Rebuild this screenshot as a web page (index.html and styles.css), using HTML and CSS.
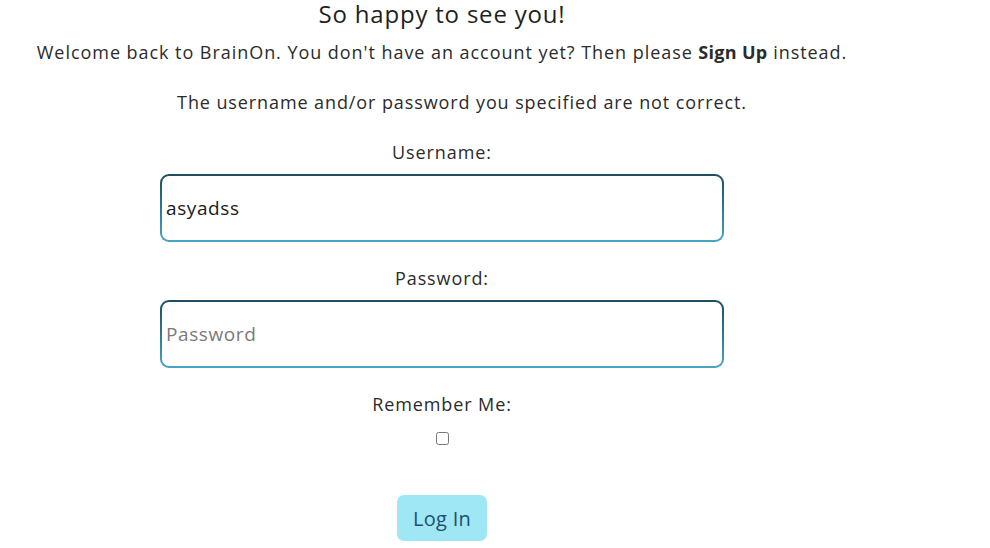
FILE: index.html
```html
<!DOCTYPE html>
<html>
<head>
<meta charset="utf-8">
<link rel="stylesheet" href="styles.css">
</head>
<body>
<main class="page">
  <h1 class="title">So happy to see you!</h1>
  <p class="intro">Welcome back to BrainOn. You don't have an account yet? Then please <a class="signup" href="#">Sign Up</a> instead.</p>
  <p class="error">The username and/or password you specified are not correct.</p>
  <form class="form">
    <label class="label" for="u">Username:</label>
    <input class="field" id="u" type="text" value="asyadss">
    <label class="label label-gap" for="p">Password:</label>
    <input class="field" id="p" type="password" placeholder="Password">
    <label class="label label-gap" for="r">Remember Me:</label>
    <input class="check" id="r" type="checkbox">
    <button class="btn" type="button">Log In</button>
  </form>
</main>
</body>
</html>
```
FILE: styles.css
```css
html, body { margin: 0; padding: 0; background: #fff; }
body {
  font-family: "Open Sans", "Noto Sans", sans-serif;
  color: #2b2b2b;
  letter-spacing: 0.9px;
}
.page {
  width: 884px;
  text-align: center;
}
.title {
  margin: 0;
  font-size: 24px;
  font-weight: 400;
  line-height: 27px;
  letter-spacing: 0.8px;
  color: #1f1f1f;
}
.intro {
  margin: 13px 0 0;
  font-size: 18px;
  line-height: 24px;
  letter-spacing: 0.95px;
}
.signup {
  color: #2b2b2b;
  font-weight: 700;
  letter-spacing: 0.3px;
  text-decoration: none;
}
.error {
  margin: 26px 0 0;
  padding-left: 40px;
  font-size: 18px;
  line-height: 24px;
}
.form {
  display: flex;
  flex-direction: column;
  align-items: center;
  margin-top: 26px;
}
.label {
  font-size: 18px;
  line-height: 24px;
  margin-bottom: 10px;
}
.label-gap { margin-top: 24px; }
.field {
  box-sizing: border-box;
  width: 564px;
  height: 68px;
  padding: 0 4px;
  border: 2px solid transparent;
  border-radius: 9px;
  background: linear-gradient(#fff, #fff) padding-box,
              linear-gradient(180deg, #1d4e5f 0%, #2f7d95 55%, #48a6c4 100%) border-box;
  font-family: "Open Sans", "Noto Sans", sans-serif;
  font-size: 19px;
  letter-spacing: 0.6px;
  color: #1a1a1a;
  outline: none;
}
.field::placeholder { color: #7a7a7a; }
.check {
  width: 13px;
  height: 13px;
  margin: 6px 0 0;
}
.btn {
  margin-top: 50px;
  width: 90px;
  height: 46px;
  border: none;
  border-radius: 7px;
  background: #9fe7f5;
  color: #1d4f6e;
  font-family: "Open Sans", "Noto Sans", sans-serif;
  font-size: 20px;
  letter-spacing: 0.3px;
}
```
